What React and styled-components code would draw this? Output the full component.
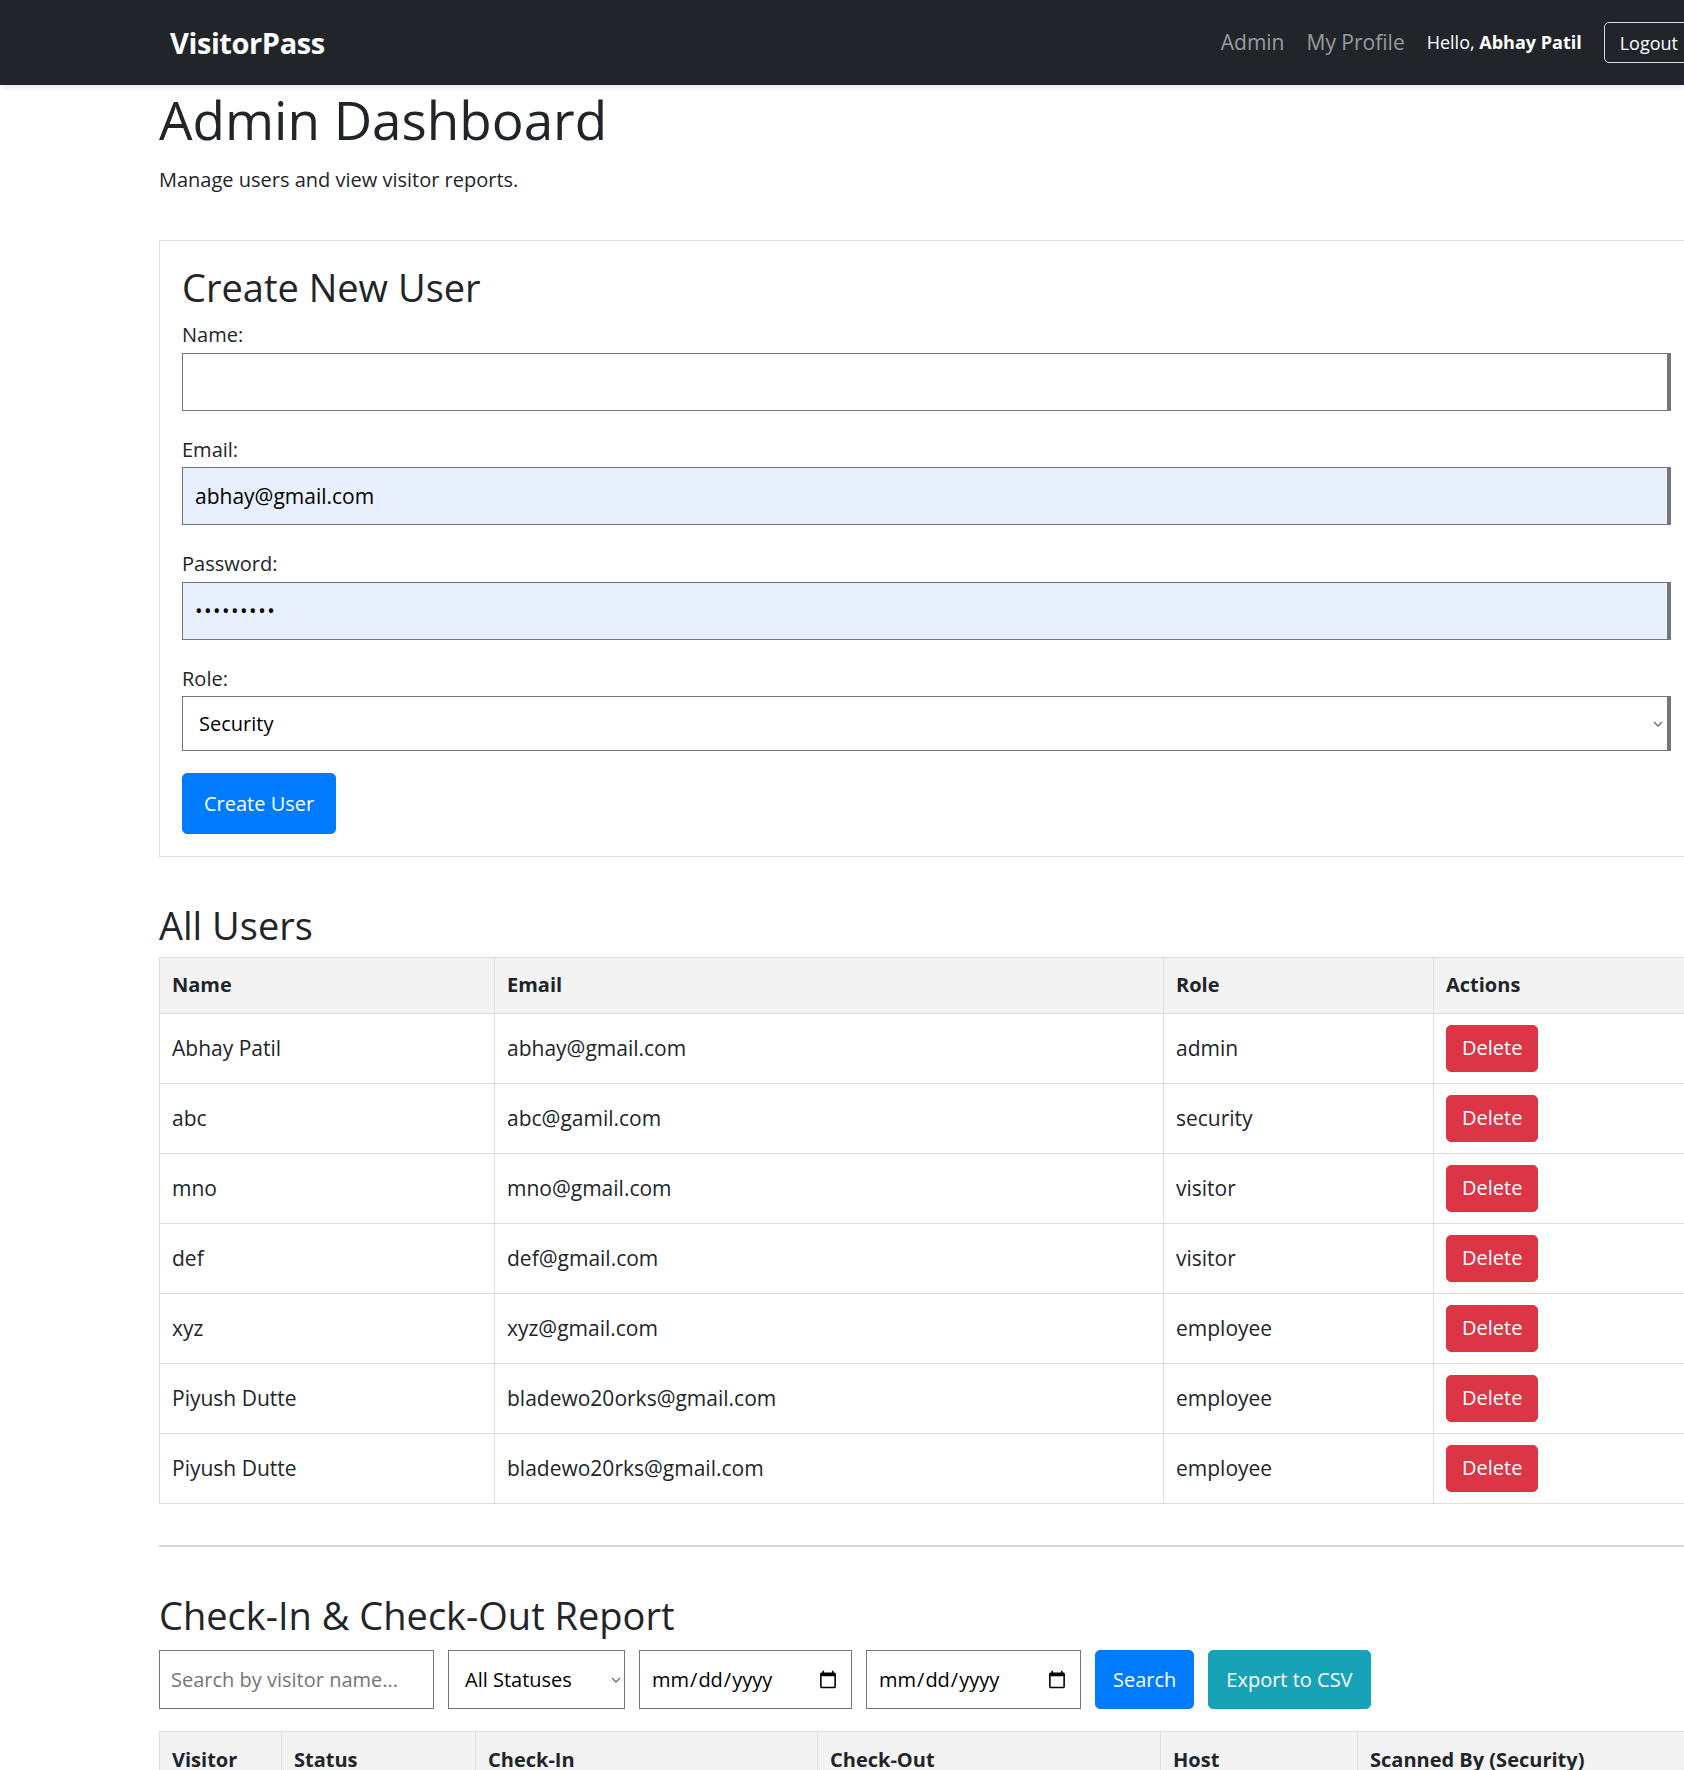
import styled, { createGlobalStyle } from "styled-components";

const GlobalStyle = createGlobalStyle`
  html, body {
    margin: 0;
    padding: 0;
    background: #fff;
  }
  body {
    font-family: "Open Sans", "Noto Sans", "Liberation Sans", sans-serif;
    font-size: 20px;
    line-height: 1.5;
    color: #212529;
    overflow-x: hidden;
  }
  *, *::before, *::after {
    box-sizing: border-box;
  }
`;

const users = [
  { name: "Abhay Patil", email: "abhay@gmail.com", role: "admin" },
  { name: "abc", email: "abc@gamil.com", role: "security" },
  { name: "mno", email: "mno@gmail.com", role: "visitor" },
  { name: "def", email: "def@gmail.com", role: "visitor" },
  { name: "xyz", email: "xyz@gmail.com", role: "employee" },
  { name: "Piyush Dutte", email: "bladewo20orks@gmail.com", role: "employee" },
  { name: "Piyush Dutte", email: "bladewo20rks@gmail.com", role: "employee" },
];

const reportColumns = [
  { label: "Visitor", width: 122 },
  { label: "Status", width: 194 },
  { label: "Check-In", width: 342 },
  { label: "Check-Out", width: 343 },
  { label: "Host", width: 197 },
  { label: "Scanned By (Security)" },
];

const Chevron = () => (
  <svg width="10" height="6" viewBox="0 0 10 6" fill="none">
    <path d="M1 1l4 4 4-4" stroke="#6d6d6d" strokeWidth="1.3" />
  </svg>
);

const App = () => {
  return (
    <Page>
      <GlobalStyle />
      <Navbar>
        <NavInner>
          <Brand>VisitorPass</Brand>
          <NavRight>
            <NavLink>Admin</NavLink>
            <NavLink>My Profile</NavLink>
            <Greeting>
              Hello, <strong>Abhay Patil</strong>
            </Greeting>
            <LogoutButton>Logout</LogoutButton>
          </NavRight>
        </NavInner>
      </Navbar>

      <Container>
        <Title>Admin Dashboard</Title>
        <Lead>Manage users and view visitor reports.</Lead>

        <Card>
          <SectionTitle $gap={10}>Create New User</SectionTitle>
          <FormGroup>
            <Label>Name:</Label>
            <Field type="text" />
          </FormGroup>
          <FormGroup>
            <Label>Email:</Label>
            <Field type="email" defaultValue="abhay@gmail.com" $filled />
          </FormGroup>
          <FormGroup>
            <Label>Password:</Label>
            <Field type="password" defaultValue="abcdefghi" $filled />
          </FormGroup>
          <FormGroup $last>
            <Label>Role:</Label>
            <SelectWrap>
              <RoleSelect defaultValue="security">
                <option value="visitor">Visitor</option>
                <option value="employee">Employee</option>
                <option value="security">Security</option>
                <option value="admin">Admin</option>
              </RoleSelect>
              <ChevronSlot $right={8}>
                <Chevron />
              </ChevronSlot>
            </SelectWrap>
          </FormGroup>
          <Button $variant="primary" $size="lg">Create User</Button>
        </Card>

        <SectionTitle $gap={8}>All Users</SectionTitle>
        <Table>
          <colgroup>
            <col style={{ width: 335 }} />
            <col style={{ width: 669 }} />
            <col style={{ width: 270 }} />
            <col />
          </colgroup>
          <thead>
            <tr>
              <Th>Name</Th>
              <Th>Email</Th>
              <Th>Role</Th>
              <Th>Actions</Th>
            </tr>
          </thead>
          <tbody>
            {users.map((u, i) => (
              <tr key={i}>
                <Td>{u.name}</Td>
                <Td>{u.email}</Td>
                <Td>{u.role}</Td>
                <Td>
                  <Button $variant="danger">Delete</Button>
                </Td>
              </tr>
            ))}
          </tbody>
        </Table>

        <Divider />

        <SectionTitle $gap={10}>Check-In &amp; Check-Out Report</SectionTitle>
        <Filters>
          <FilterInput type="text" placeholder="Search by visitor name..." $width={275} />
          <SelectWrap>
            <StatusSelect defaultValue="">
              <option value="">All Statuses</option>
              <option value="in">Checked In</option>
              <option value="out">Checked Out</option>
            </StatusSelect>
            <ChevronSlot $right={4}>
              <Chevron />
            </ChevronSlot>
          </SelectWrap>
          <FilterInput type="date" $width={213} />
          <FilterInput type="date" $width={215} />
          <Button $variant="primary" $size="md">Search</Button>
          <Button $variant="info" $size="md">Export to CSV</Button>
        </Filters>

        <Table $report>
          <colgroup>
            {reportColumns.map((c) => (
              <col key={c.label} style={c.width ? { width: c.width } : undefined} />
            ))}
          </colgroup>
          <thead>
            <tr>
              {reportColumns.map((c) => (
                <Th key={c.label}>{c.label}</Th>
              ))}
            </tr>
          </thead>
        </Table>
      </Container>
    </Page>
  );
};

const Page = styled.div`
  width: 100%;
  min-height: 1770px;
  overflow: hidden;
`;

const Navbar = styled.nav`
  height: 85px;
  background: #212529;
  box-shadow: 0 2px 6px rgba(0, 0, 0, 0.12);
  display: flex;
  align-items: center;
`;

const NavInner = styled.div`
  width: 1557px;
  flex-shrink: 0;
  margin-left: 159px;
  padding: 0 22px 0 11px;
  display: flex;
  align-items: center;
  justify-content: space-between;
`;

const Brand = styled.div`
  color: #fff;
  font-size: 29px;
  font-weight: 700;
  letter-spacing: -0.4px;
`;

const NavRight = styled.div`
  display: flex;
  align-items: center;
  gap: 22px;
`;

const NavLink = styled.a`
  color: rgba(255, 255, 255, 0.55);
  font-size: 21px;
  text-decoration: none;
`;

const Greeting = styled.span`
  color: #fff;
  font-size: 18px;

  strong {
    font-weight: 700;
  }
`;

const LogoutButton = styled.button`
  font-family: inherit;
  font-size: 18px;
  color: #fff;
  background: transparent;
  border: 1px solid #d8d9da;
  border-radius: 5px;
  height: 41px;
  padding: 0 15px;
`;

const Container = styled.main`
  width: 1557px;
  margin-left: 159px;
`;

const Title = styled.h1`
  margin: 3px 0 13px;
  font-size: 53px;
  font-weight: 500;
  line-height: 1.2;
`;

const Lead = styled.p`
  margin: 0 0 45px;
  font-size: 20px;
`;

const Card = styled.section`
  border: 1px solid #e2e2e2;
  padding: 24px 22px 22px;
  margin-bottom: 46px;
`;

const SectionTitle = styled.h2`
  margin: 0 0 ${(p) => p.$gap}px;
  font-size: 38px;
  font-weight: 500;
  line-height: 1.2;
`;

const FormGroup = styled.div`
  margin-bottom: ${(p) => (p.$last ? 22 : 24)}px;
`;

const Label = styled.label`
  display: block;
  font-size: 20px;
  margin-bottom: 2.5px;
`;

const Field = styled.input`
  display: block;
  width: 1489px;
  height: 58px;
  padding: 0 12px;
  font-family: inherit;
  font-size: 21px;
  color: #000;
  background: ${(p) => (p.$filled ? "#e8f0fe" : "#fff")};
  border: 1px solid #767676;
  border-right-width: 4px;
  border-radius: 0;
  outline: none;

  &[type="password"] {
    font-size: 20px;
    letter-spacing: 1.5px;
  }
`;

const SelectWrap = styled.div`
  position: relative;
  display: inline-block;
`;

const ChevronSlot = styled.span`
  position: absolute;
  top: 50%;
  right: ${(p) => p.$right}px;
  transform: translateY(-50%);
  display: flex;
  pointer-events: none;
`;

const RoleSelect = styled.select`
  display: block;
  width: 1489px;
  height: 55px;
  padding: 0 16px;
  font-family: inherit;
  font-size: 20px;
  color: #000;
  background: #fff;
  border: 1px solid #767676;
  border-right-width: 4px;
  border-radius: 0;
  appearance: none;
  outline: none;
`;

const StatusSelect = styled.select`
  display: block;
  width: 177px;
  height: 59px;
  padding: 0 16px;
  font-family: inherit;
  font-size: 20px;
  color: #000;
  background: #fff;
  border: 1px solid #767676;
  border-radius: 0;
  appearance: none;
  outline: none;
`;

const buttonColors = {
  primary: "#007bff",
  danger: "#dc3545",
  info: "#17a2b8",
};

const buttonPadding = {
  lg: "0 21px",
  md: "0 17px",
  sm: "0 15px",
};

const buttonHeight = {
  lg: 61,
  md: 59,
  sm: 47,
};

const Button = styled.button`
  font-family: inherit;
  font-size: 20px;
  color: #fff;
  background: ${(p) => buttonColors[p.$variant]};
  border: 1px solid ${(p) => buttonColors[p.$variant]};
  border-radius: 5px;
  height: ${(p) => buttonHeight[p.$size || "sm"]}px;
  padding: ${(p) => buttonPadding[p.$size || "sm"]};
  line-height: 1.5;
  cursor: pointer;
`;

const Table = styled.table`
  width: 100%;
  table-layout: fixed;
  border-collapse: collapse;
  margin-bottom: ${(p) => (p.$report ? 0 : 41)}px;
`;

const Th = styled.th`
  text-align: left;
  font-weight: 700;
  font-size: 20px;
  background: #f3f3f3;
  border: 1px solid #dedede;
  padding: 0 12px;
  height: 56px;
  white-space: nowrap;
`;

const Td = styled.td`
  font-size: 21px;
  border: 1px solid #dedede;
  padding: 11px 12px;
  height: 70px;
  white-space: nowrap;
`;

const Divider = styled.hr`
  border: 0;
  border-top: 2px solid #d6d6d6;
  margin: 0 0 46px;
`;

const Filters = styled.div`
  display: flex;
  align-items: center;
  gap: 14px;
  margin: 12px 0 22px;
`;

const FilterInput = styled.input`
  width: ${(p) => p.$width}px;
  height: 59px;
  padding: 0 11px;
  font-family: inherit;
  font-size: 20px;
  color: #000;
  background: #fff;
  border: 1px solid #767676;
  border-radius: 0;
  outline: none;

  &::placeholder {
    color: #757575;
  }
`;

export default App;
